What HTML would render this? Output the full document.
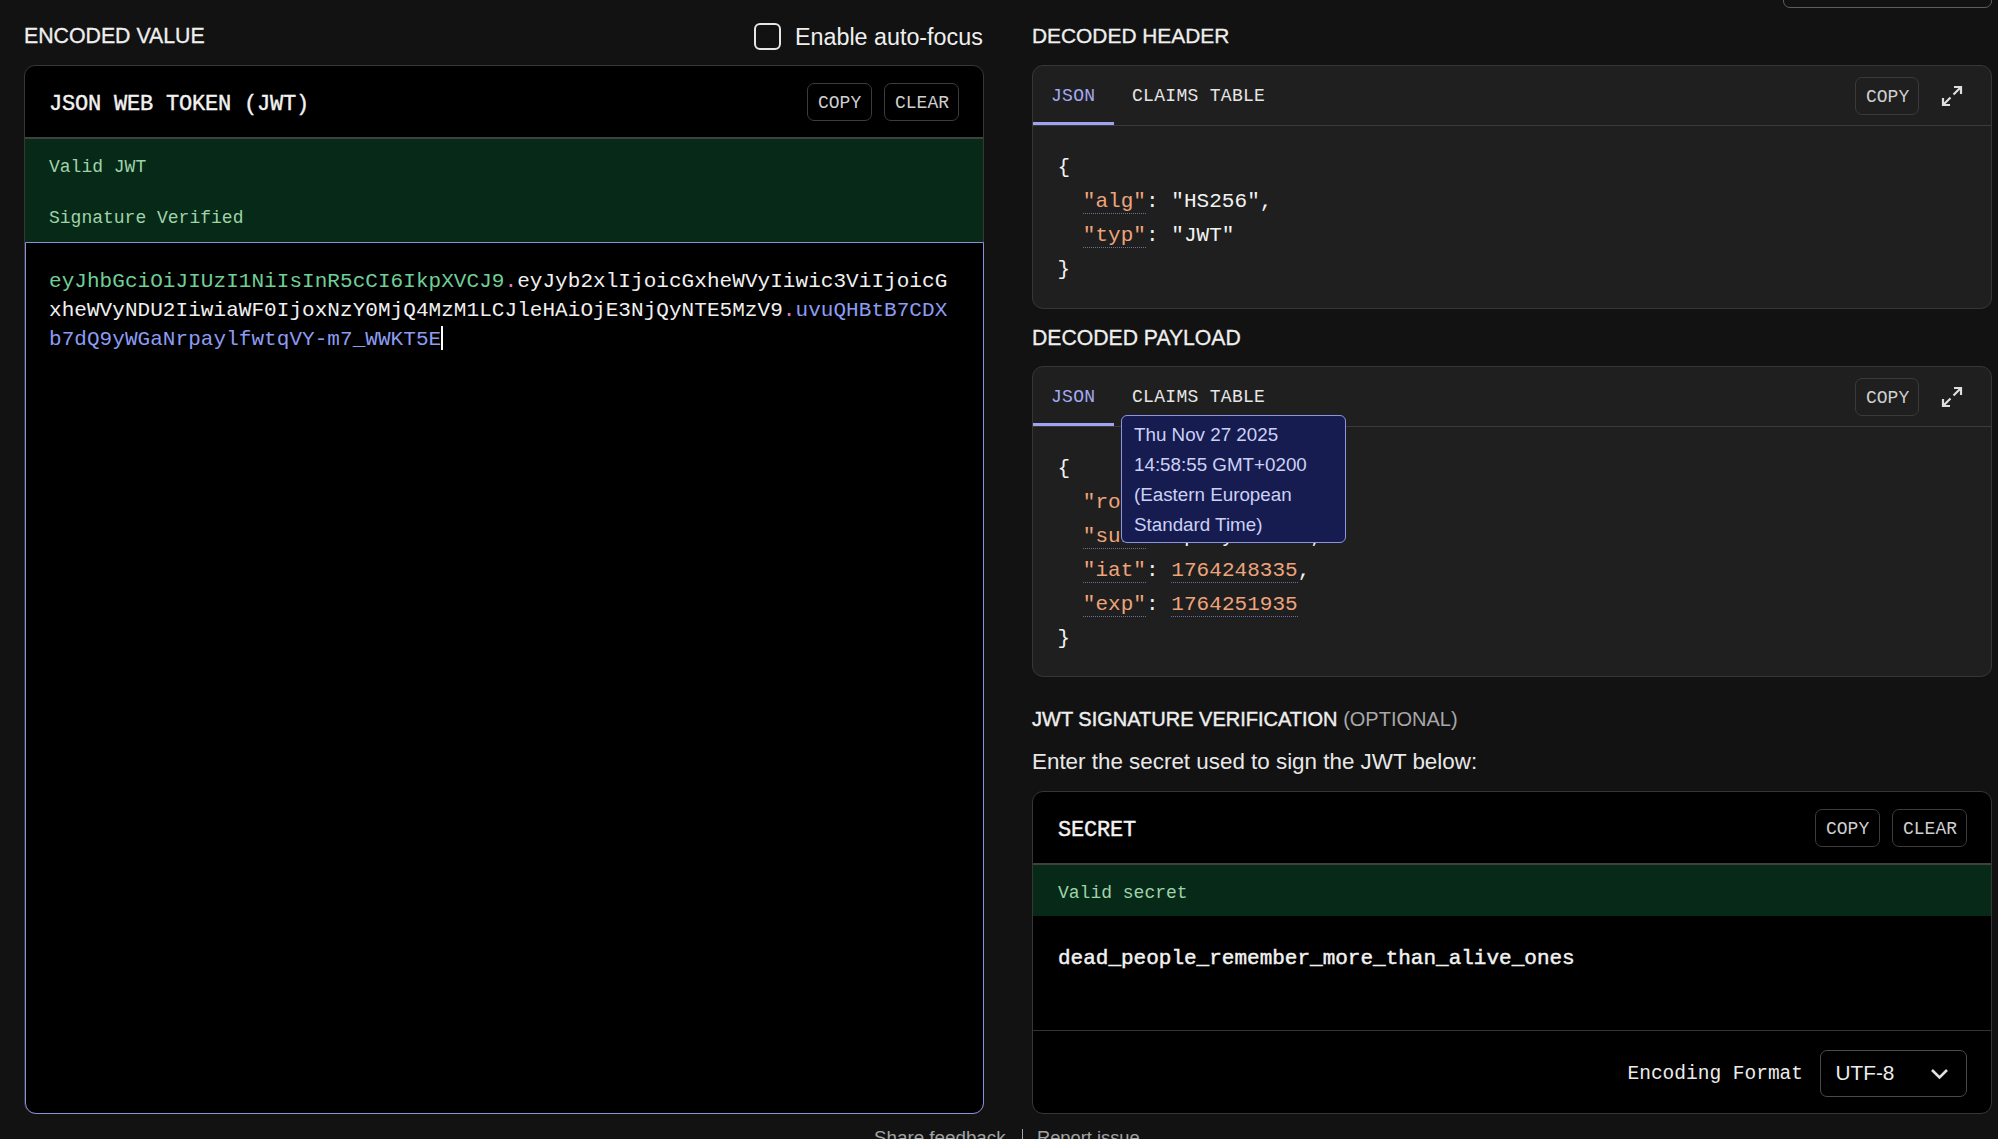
<!DOCTYPE html>
<html><head><meta charset="utf-8">
<style>
*{box-sizing:border-box;margin:0;padding:0}
html,body{width:1998px;height:1139px;overflow:hidden;background:#121212;color:#ececec;font-family:"Liberation Sans",sans-serif}
.abs{position:absolute}
.t{position:absolute;white-space:pre;line-height:1}
.mono{font-family:"Liberation Mono",monospace}
.card{position:absolute;border:1px solid #363636;border-radius:11px;overflow:hidden}
.btn{position:absolute;border:1px solid #3c3c3c;border-radius:7px;font-family:"Liberation Mono",monospace;font-size:18px;color:#cfcfcf;line-height:1}
.btn span{position:absolute;white-space:pre}
.green{position:absolute;background:#072918;left:0;right:0}
.gtxt{position:absolute;font-family:"Liberation Mono",monospace;font-size:18px;color:#9fd3a8;white-space:pre;line-height:1}
.key{color:#eea47a}
.num{color:#eea47a}
.ul{border-bottom:1px dotted #6d6f9a}
.json{position:absolute;font-family:"Liberation Mono",monospace;font-size:21px;letter-spacing:0.04px;color:#f2f2f2;white-space:pre;line-height:34px}
</style></head>
<body>
<!-- top-right box -->
<div class="abs" style="left:1783px;top:-20px;width:209px;height:28px;border:1.5px solid #5e5e5e;border-radius:7px"></div>

<!-- LEFT -->
<div class="t" style="left:24px;top:26px;font-size:21.3px;color:#efefef;-webkit-text-stroke:0.3px #efefef">ENCODED VALUE</div>
<div class="abs" style="left:754px;top:23px;width:27px;height:27px;border:2.5px solid #e6e6e6;border-radius:6px"></div>
<div class="t" style="left:795px;top:26px;font-size:23.3px;color:#efefef">Enable auto-focus</div>

<div class="card" style="left:24px;top:65px;width:960px;height:1049px;background:#000">
  <div class="abs" style="left:0;top:0;right:0;height:73px;border-bottom:2px solid #404040"></div>
  <div class="t mono" style="left:24px;top:28px;font-size:22px;letter-spacing:-0.2px;-webkit-text-stroke:0.4px #f2f2f2;color:#f2f2f2">JSON WEB TOKEN (JWT)</div>
  <div class="btn" style="left:782px;top:17px;width:65px;height:38px"><span style="left:10px;top:10px">COPY</span></div>
  <div class="btn" style="left:859px;top:17px;width:75px;height:38px"><span style="left:10px;top:10px">CLEAR</span></div>
  <div class="green" style="top:73px;height:104px"></div>
  <div class="gtxt" style="left:24px;top:92px">Valid JWT</div>
  <div class="gtxt" style="left:24px;top:143px">Signature Verified</div>
</div>
<div class="abs" style="left:25px;top:242px;width:959px;height:872px;border:1.5px solid #8a8fe0;border-top-width:1.5px;border-radius:0 0 11px 11px;background:#000"></div>
<div class="abs mono" style="left:49px;top:266.5px;font-size:21px;letter-spacing:0.05px;line-height:29.4px;white-space:pre;color:#f0f0f0"><span style="color:#6fcf97">eyJhbGciOiJIUzI1NiIsInR5cCI6IkpXVCJ9</span><span style="color:#e879b9">.</span>eyJyb2xlIjoicGxheWVyIiwic3ViIjoicG
xheWVyNDU2IiwiaWF0IjoxNzY0MjQ4MzM1LCJleHAiOjE3NjQyNTE5MzV9<span style="color:#e879b9">.</span><span style="color:#8c9cf2">uvuQHBtB7CDX</span>
<span style="color:#8c9cf2">b7dQ9yWGaNrpaylfwtqVY-m7_WWKT5E</span><span style="display:inline-block;width:2px;height:24px;background:#fff;vertical-align:-5px"></span></div>

<!-- RIGHT: header -->
<div class="t" style="left:1032px;top:26px;font-size:20.9px;color:#efefef;-webkit-text-stroke:0.3px #efefef">DECODED HEADER</div>
<div class="card" style="left:1032px;top:65px;width:960px;height:244px;background:#1f1f1f">
  <div class="abs" style="left:0;right:0;top:59px;height:1px;background:#3a3a3a"></div>
  <div class="abs" style="left:0;top:56px;width:81px;height:3px;background:#9ea3f2"></div>
  <div class="t mono" style="left:18px;top:20.5px;font-size:18px;letter-spacing:0.3px;color:#a5aaf2">JSON</div>
  <div class="t mono" style="left:99px;top:20.5px;font-size:18px;letter-spacing:0.3px;color:#e6e6e6">CLAIMS TABLE</div>
  <div class="btn" style="left:822px;top:11px;width:64px;height:38px;border-color:#3a3a3a"><span style="left:10px;top:10px">COPY</span></div>
  <svg class="abs" style="left:907px;top:18px" width="24" height="24" viewBox="0 0 24 24" fill="none" stroke="#dedede" stroke-width="2.2"><path d="M14 3h7v7M21 3l-7.5 7.5M10 21H3v-7M3 21l7.5-7.5"/></svg>
  <div class="json" style="left:24.5px;top:85px">{
  <span class="key ul">"alg"</span>: "HS256",
  <span class="key ul">"typ"</span>: "JWT"
}</div>
</div>

<!-- RIGHT: payload -->
<div class="t" style="left:1032px;top:327px;font-size:21.2px;color:#efefef;-webkit-text-stroke:0.3px #efefef">DECODED PAYLOAD</div>
<div class="card" style="left:1032px;top:366px;width:960px;height:311px;background:#1f1f1f">
  <div class="abs" style="left:0;right:0;top:59px;height:1px;background:#3a3a3a"></div>
  <div class="abs" style="left:0;top:56px;width:81px;height:3px;background:#9ea3f2"></div>
  <div class="t mono" style="left:18px;top:20.5px;font-size:18px;letter-spacing:0.3px;color:#a5aaf2">JSON</div>
  <div class="t mono" style="left:99px;top:20.5px;font-size:18px;letter-spacing:0.3px;color:#e6e6e6">CLAIMS TABLE</div>
  <div class="btn" style="left:822px;top:11px;width:64px;height:38px;border-color:#3a3a3a"><span style="left:10px;top:10px">COPY</span></div>
  <svg class="abs" style="left:907px;top:18px" width="24" height="24" viewBox="0 0 24 24" fill="none" stroke="#dedede" stroke-width="2.2"><path d="M14 3h7v7M21 3l-7.5 7.5M10 21H3v-7M3 21l7.5-7.5"/></svg>
  <div class="json" style="left:24.5px;top:85px">{
  <span class="key">"role"</span>: "player",
  <span class="key ul">"sub"</span>: "player456",
  <span class="key ul">"iat"</span>: <span class="num ul">1764248335</span>,
  <span class="key ul">"exp"</span>: <span class="num ul">1764251935</span>
}</div>
</div>
<!-- tooltip -->
<div class="abs" style="left:1121px;top:415px;width:225px;height:128px;background:#161c50;border:1px solid #8d95e3;border-radius:6px"></div>
<div class="abs" style="left:1134px;top:420px;font-size:18.8px;line-height:30px;color:#ccd1f6;white-space:pre">Thu Nov 27 2025
14:58:55 GMT+0200
(Eastern European
Standard Time)</div>

<!-- signature -->
<div class="t" style="left:1032px;top:709px;font-size:20px;color:#efefef"><span style="-webkit-text-stroke:0.4px #efefef">JWT SIGNATURE VERIFICATION</span> <span style="color:#a8a8a8">(OPTIONAL)</span></div>
<div class="t" style="left:1032px;top:751px;font-size:22.4px;color:#e8e8e8">Enter the secret used to sign the JWT below:</div>

<div class="card" style="left:1032px;top:791px;width:960px;height:323px;background:#000">
  <div class="abs" style="left:0;top:0;right:0;height:73px;border-bottom:2px solid #404040"></div>
  <div class="t mono" style="left:25px;top:28px;font-size:22px;letter-spacing:-0.2px;-webkit-text-stroke:0.4px #f2f2f2;color:#f2f2f2">SECRET</div>
  <div class="btn" style="left:782px;top:17px;width:65px;height:38px"><span style="left:10px;top:10px">COPY</span></div>
  <div class="btn" style="left:859px;top:17px;width:75px;height:38px"><span style="left:10px;top:10px">CLEAR</span></div>
  <div class="green" style="top:73px;height:51px"></div>
  <div class="gtxt" style="left:25px;top:92px">Valid secret</div>
  <div class="t mono" style="left:25px;top:156px;font-size:21px;-webkit-text-stroke:0.45px #f2f2f2;color:#f2f2f2">dead_people_remember_more_than_alive_ones</div>
  <div class="abs" style="left:0;right:0;top:238px;height:1px;background:#333"></div>
  <div class="t mono" style="left:594.5px;top:273px;font-size:19.5px;color:#ececec">Encoding Format</div>
  <div class="abs" style="left:787px;top:257.5px;width:147px;height:47.5px;border:1px solid #4a4a4a;border-radius:7px"></div>
  <div class="t" style="left:802.5px;top:270.5px;font-size:20.8px;color:#ececec">UTF-8</div>
  <svg class="abs" style="left:897px;top:276px" width="19" height="13" viewBox="0 0 19 13" fill="none" stroke="#e0e0e0" stroke-width="2.6"><path d="M2 2l7.5 7.5L17 2"/></svg>
</div>

<!-- footer -->
<div class="t" style="left:874px;top:1129px;font-size:18.8px;color:#a3a3a3">Share feedback</div>
<div class="abs" style="left:1021.5px;top:1129px;width:1.5px;height:20px;background:#a3a3a3"></div>
<div class="t" style="left:1037px;top:1129px;font-size:18.3px;color:#a3a3a3">Report issue</div>
</body></html>
